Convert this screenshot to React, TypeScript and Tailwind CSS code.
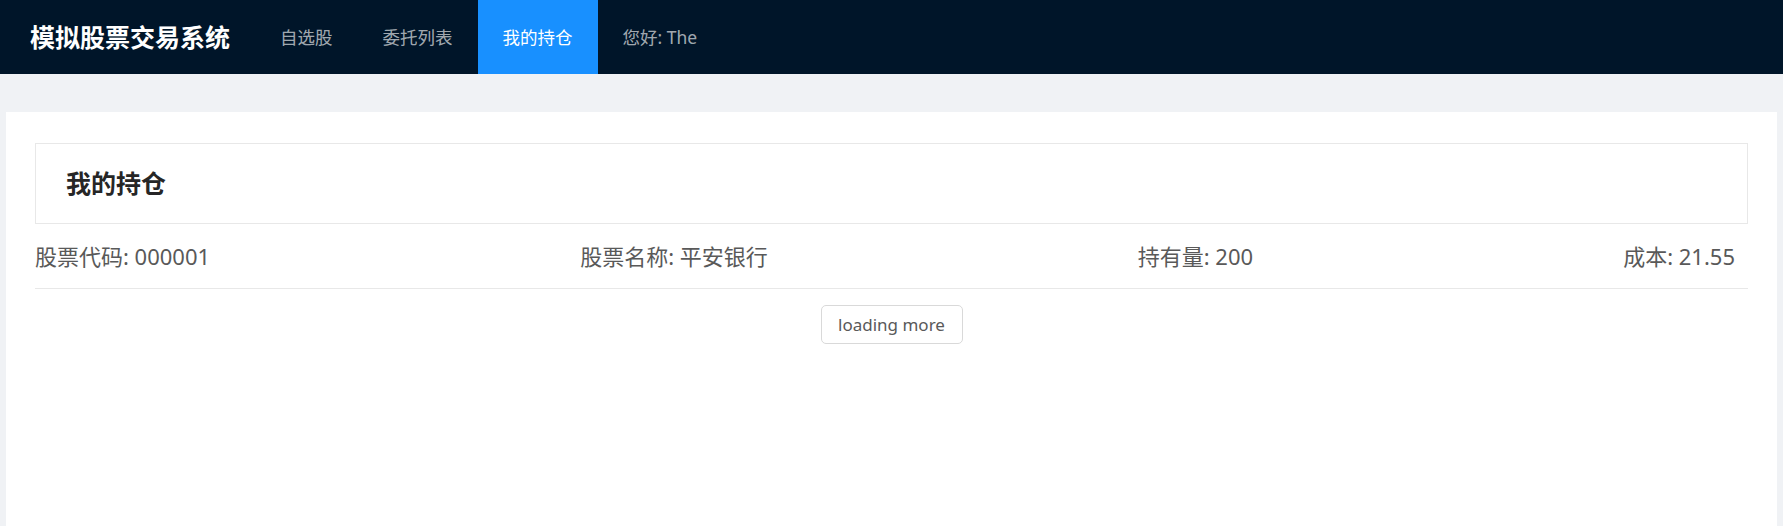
import React from "react";

const font = { fontFamily: '"Noto Sans", "Noto Sans CJK SC", sans-serif' };

export default function App() {
  const items = [
    { label: "自选股", active: false },
    { label: "委托列表", active: false },
    { label: "我的持仓", active: true },
    { label: "您好: The", active: false },
  ];
  return (
    <div className="min-h-[526px] bg-[#f0f2f5] flex flex-col" style={font}>
      <header className="h-[74px] bg-[#001529] flex items-stretch pl-[30px]">
        <div className="w-[225px] flex items-center text-[25px] font-bold text-white leading-none">
          模拟股票交易系统
        </div>
        <nav className="flex items-stretch">
          {items.map((it) => (
            <div
              key={it.label}
              className={
                it.active
                  ? "px-[25px] flex items-center text-[17.5px] bg-[#1890ff] text-white"
                  : "px-[25px] flex items-center text-[17.5px] text-[rgba(255,255,255,0.65)]"
              }
            >
              {it.label}
            </div>
          ))}
        </nav>
      </header>
      <main className="flex-1 pt-[38px] px-[6px] flex flex-col">
        <div className="flex-1 bg-white pt-[31px] px-[29px] min-h-[414px]">
          <div className="h-[81px] border border-[#e8e8e8] flex items-center pl-[30px]">
            <h2 className="text-[25px] font-bold text-[#262626] leading-none">我的持仓</h2>
          </div>
          <div className="h-[65px] border-b border-[#e8e8e8] flex items-center justify-between pr-[13px] text-[22px] text-[#595959]">
            <span>股票代码: 000001</span>
            <span>股票名称: 平安银行</span>
            <span>持有量: 200</span>
            <span>成本: 21.55</span>
          </div>
          <div className="flex justify-center mt-[16px]">
            <button className="h-[39px] w-[142px] border border-[#d9d9d9] rounded-[5px] bg-white text-[17px] text-[#595959]">
              loading more
            </button>
          </div>
        </div>
      </main>
    </div>
  );
}
